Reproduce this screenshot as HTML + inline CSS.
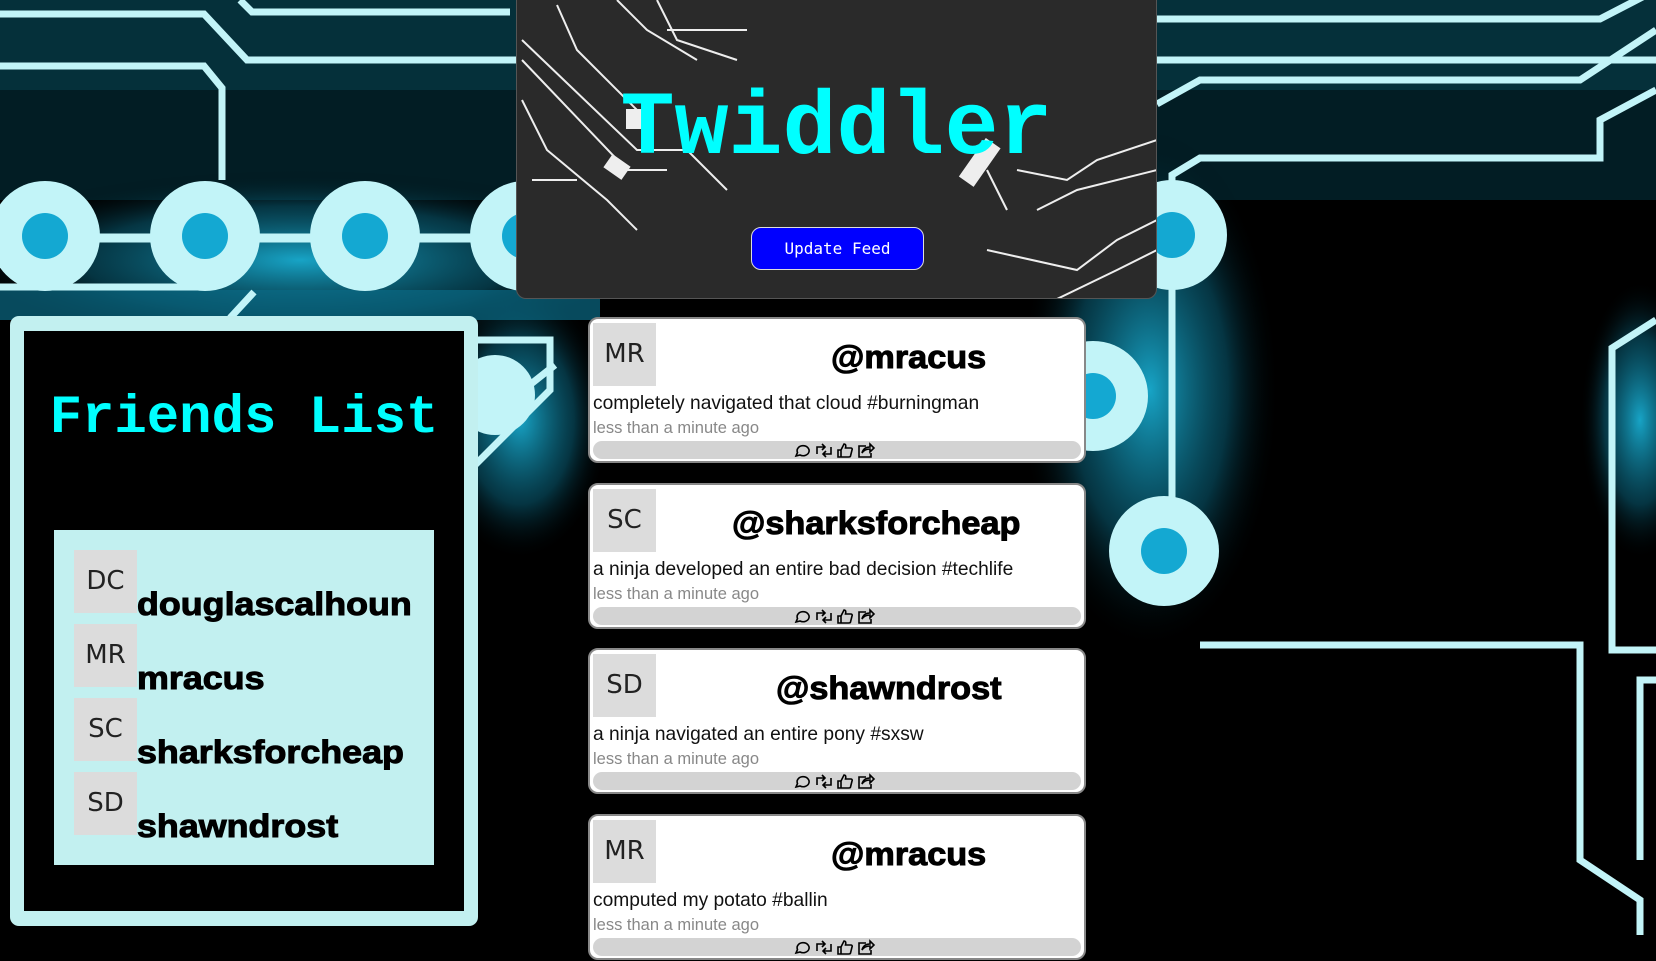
<!DOCTYPE html>
<html><head><meta charset="utf-8"><style>
*{margin:0;padding:0;box-sizing:border-box}
body{width:1656px;height:935px;overflow:hidden;position:relative;background:#000;font-family:"Liberation Sans",sans-serif}
.bg{position:absolute;left:0;top:0}
#hdr{position:absolute;left:516px;top:0;width:641px;height:299px;background:#2a2a2a;border-radius:0 0 10px 10px;overflow:hidden;border:1px solid #555;border-top:none}
#hdr h1{position:absolute;left:0;width:100%;top:80px;text-align:center;font-family:"Liberation Mono",monospace;font-weight:bold;font-size:90px;color:#0ff;line-height:100px}
#btn{position:absolute;left:234px;top:227px;width:173px;height:43px;background:#0000ff;border:1px solid #ddd;border-radius:10px;color:#fff;font-family:"DejaVu Sans Mono","Liberation Mono",monospace;font-size:16px;text-align:center;line-height:41px}
#fr{position:absolute;left:10px;top:316px;width:468px;height:610px;background:#c2f0f0;border-radius:9px;padding:15px 14px}
#fr .in{background:#000;width:100%;height:100%;position:relative}
#fr h2{position:absolute;left:0;width:100%;top:58px;text-align:center;font-family:"Liberation Mono",monospace;font-weight:bold;font-size:54px;color:#0ff;line-height:60px}
#list{position:absolute;left:30px;top:199px;width:380px;height:335px;background:#c2f0f0;padding:20px 0 0 20px}
.row{height:74px;position:relative}
.av{position:absolute;width:63px;height:63px;background:#dcdcdc;color:#222;font-family:"DejaVu Sans",sans-serif;font-size:26px;text-align:center;line-height:63px}
.row .nm{position:absolute;left:63px;top:38px;font-weight:900;font-size:32px;color:#000;line-height:32px;-webkit-text-stroke:1px #000;transform:scaleX(1.12);transform-origin:left;white-space:nowrap}
.card{position:absolute;left:588px;width:498px;height:146px;background:#fff;border:2px solid #888;border-radius:10px}
.card .av{left:3px;top:4px}
.card .un{position:absolute;top:20px;font-weight:900;font-size:32px;line-height:36px;-webkit-text-stroke:1px #000;white-space:nowrap;transform:scaleX(1.07);transform-origin:left}
.card .msg{position:absolute;left:3px;top:74px;font-size:19.2px;color:#111}
.card .tm{position:absolute;left:3px;top:100px;font-size:16.5px;color:#888}
.card .bar{position:absolute;left:3px;top:122px;width:488px;height:18px;background:#d3d3d3;border-radius:9px;text-align:center}
.bar svg{margin-top:1px}
</style></head><body>
<svg class="bg" width="1656" height="935" viewBox="0 0 1656 935">
<defs>
<radialGradient id="g" r="0.5"><stop offset="0" stop-color="#1ab6dc" stop-opacity=".9"/><stop offset=".6" stop-color="#0a6a85" stop-opacity=".5"/><stop offset="1" stop-color="#000" stop-opacity="0"/></radialGradient>
</defs>
<rect width="1656" height="935" fill="#000"/>
<rect x="0" y="0" width="1656" height="200" fill="#05303a"/>
<rect x="0" y="90" width="1656" height="110" fill="#021d24"/>
<ellipse cx="300" cy="260" rx="360" ry="90" fill="url(#g)"/>
<ellipse cx="1150" cy="390" rx="130" ry="260" fill="url(#g)"/>
<ellipse cx="520" cy="420" rx="90" ry="140" fill="url(#g)"/>
<ellipse cx="1640" cy="420" rx="60" ry="140" fill="url(#g)"/>
<rect x="0" y="290" width="600" height="30" fill="#0a6a85" opacity=".7"/>
<g stroke="#c2f4f8" fill="none" stroke-width="7">
<path d="M0 14H204L247 60H1656"/>
<path d="M240 0L252 12H510"/>
<path d="M0 66H204L222 88V180"/>
<path d="M0 287H205M254 292L230 318"/>
<path d="M1157 19H1600L1656 -10"/>
<path d="M1157 104L1200 80H1580L1656 30"/>
<path d="M1172 185V175L1200 158H1600V120L1656 90"/>
<path d="M1172 235V551"/>
<path d="M1200 645H1580V860L1640 900V935"/>
<path d="M1656 320L1612 348V650H1656"/>
<path d="M1656 680H1640V860"/>
<path d="M478 340H550V390L470 470"/>
<path d="M555 365L460 440"/>
</g>
<g stroke="#c2f4f8" stroke-width="9"><path d="M0 238H560"/></g>
<g fill="#c2f4f8">
<circle cx="45" cy="236" r="55"/><circle cx="205" cy="236" r="55"/><circle cx="365" cy="236" r="55"/><circle cx="525" cy="236" r="55"/>
<circle cx="1172" cy="235" r="55"/><circle cx="1093" cy="396" r="55"/><circle cx="1164" cy="551" r="55"/><circle cx="495" cy="395" r="40"/>
</g>
<g fill="#14a8d2">
<circle cx="45" cy="236" r="23"/><circle cx="205" cy="236" r="23"/><circle cx="365" cy="236" r="23"/><circle cx="525" cy="236" r="23"/>
<circle cx="1172" cy="235" r="23"/><circle cx="1093" cy="396" r="23"/><circle cx="1164" cy="551" r="23"/>
</g>
</svg>

<div id="hdr">
<svg width="641" height="299" style="position:absolute;left:0;top:0" fill="none" stroke="#eee" stroke-width="2">
<path d="M5 40L120 150H170L210 190"/><path d="M5 60L110 170H150"/><path d="M5 100L30 150L90 200L120 230"/><path d="M15 180H60"/>
<path d="M40 5L60 50L120 110"/><path d="M100 0L130 30L180 60"/><path d="M140 0L160 40L220 60"/><path d="M150 30H230"/>
<path d="M640 140L580 160L550 180L500 170"/><path d="M640 170L560 190L520 210"/><path d="M640 220L600 240L560 270L470 250"/><path d="M640 250L600 270L540 299"/><path d="M470 170L490 210"/>
<rect x="455" y="140" width="16" height="45" fill="#eee" transform="rotate(35 463 162)"/>
<rect x="110" y="110" width="18" height="18" fill="#eee"/><rect x="90" y="160" width="20" height="14" fill="#eee" transform="rotate(35 100 167)"/>
</svg>
<h1>Twiddler</h1>
<div id="btn">Update Feed</div>
</div>

<div id="fr"><div class="in">
<h2>Friends List</h2>
<div id="list">
<div class="row"><div class="av">DC</div><div class="nm">douglascalhoun</div></div>
<div class="row"><div class="av">MR</div><div class="nm">mracus</div></div>
<div class="row"><div class="av">SC</div><div class="nm">sharksforcheap</div></div>
<div class="row"><div class="av">SD</div><div class="nm">shawndrost</div></div>
</div>
</div></div>

<div class="card" style="top:317px"><div class="av">MR</div><div class="un" style="left:241px">@mracus</div><div class="msg">completely navigated that cloud #burningman</div><div class="tm">less than a minute ago</div><div class="bar"><svg width="88" height="17" viewBox="0 0 88 17" fill="none" stroke="#000" stroke-width="1.6"><path d="M3 14l1.5-3.5A6 5 0 1 1 7 13z"/><path d="M24 12V5h8M29 2l3 3-3 3M38 5v7h-8M33 9l-3 3 3 3"/><path d="M45 8h3v7h-3zM48 8l3-6c2 0 2 2 1.5 4H58c1 0 1.5 1 1 2l-1.5 6c0 1-1 1-2 1H48"/><path d="M73 4h-7v11h12v-4M69 11c1-4 4-6 8-6V2l4 4-4 4V7c-3 0-6 1-8 4z"/></svg></div></div>

<div class="card" style="top:483px"><div class="av">SC</div><div class="un" style="left:142px">@sharksforcheap</div><div class="msg">a ninja developed an entire bad decision #techlife</div><div class="tm">less than a minute ago</div><div class="bar"><svg width="88" height="17" viewBox="0 0 88 17" fill="none" stroke="#000" stroke-width="1.6"><path d="M3 14l1.5-3.5A6 5 0 1 1 7 13z"/><path d="M24 12V5h8M29 2l3 3-3 3M38 5v7h-8M33 9l-3 3 3 3"/><path d="M45 8h3v7h-3zM48 8l3-6c2 0 2 2 1.5 4H58c1 0 1.5 1 1 2l-1.5 6c0 1-1 1-2 1H48"/><path d="M73 4h-7v11h12v-4M69 11c1-4 4-6 8-6V2l4 4-4 4V7c-3 0-6 1-8 4z"/></svg></div></div>

<div class="card" style="top:648px"><div class="av">SD</div><div class="un" style="left:186px">@shawndrost</div><div class="msg">a ninja navigated an entire pony #sxsw</div><div class="tm">less than a minute ago</div><div class="bar"><svg width="88" height="17" viewBox="0 0 88 17" fill="none" stroke="#000" stroke-width="1.6"><path d="M3 14l1.5-3.5A6 5 0 1 1 7 13z"/><path d="M24 12V5h8M29 2l3 3-3 3M38 5v7h-8M33 9l-3 3 3 3"/><path d="M45 8h3v7h-3zM48 8l3-6c2 0 2 2 1.5 4H58c1 0 1.5 1 1 2l-1.5 6c0 1-1 1-2 1H48"/><path d="M73 4h-7v11h12v-4M69 11c1-4 4-6 8-6V2l4 4-4 4V7c-3 0-6 1-8 4z"/></svg></div></div>

<div class="card" style="top:814px"><div class="av">MR</div><div class="un" style="left:241px">@mracus</div><div class="msg">computed my potato #ballin</div><div class="tm">less than a minute ago</div><div class="bar"><svg width="88" height="17" viewBox="0 0 88 17" fill="none" stroke="#000" stroke-width="1.6"><path d="M3 14l1.5-3.5A6 5 0 1 1 7 13z"/><path d="M24 12V5h8M29 2l3 3-3 3M38 5v7h-8M33 9l-3 3 3 3"/><path d="M45 8h3v7h-3zM48 8l3-6c2 0 2 2 1.5 4H58c1 0 1.5 1 1 2l-1.5 6c0 1-1 1-2 1H48"/><path d="M73 4h-7v11h12v-4M69 11c1-4 4-6 8-6V2l4 4-4 4V7c-3 0-6 1-8 4z"/></svg></div></div>
</body></html>
